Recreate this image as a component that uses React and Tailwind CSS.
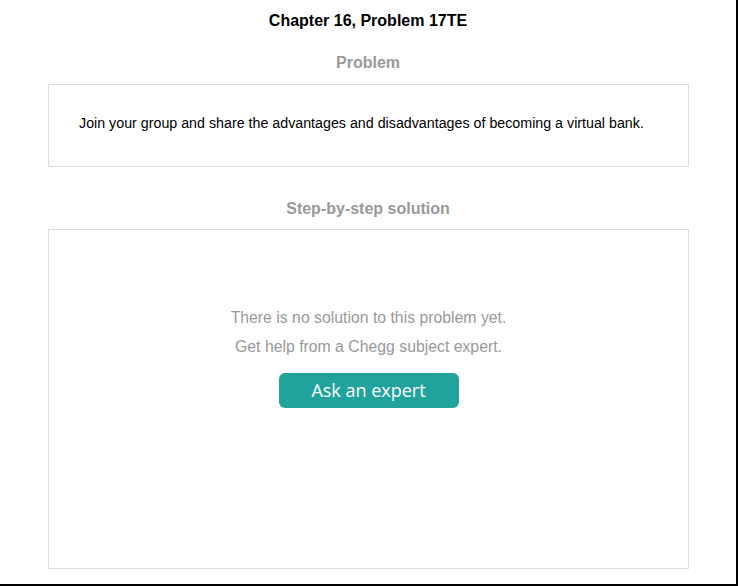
import React from "react";

const App = () => {
  return (
    <div
      className="w-[738px] h-[586px] bg-white border-r-2 border-b-2 border-black flex flex-col"
      style={{ fontFamily: '"Liberation Sans", Arial, sans-serif' }}
    >
      {/* Header */}
      <h1 className="mt-[12px] h-[18px] leading-[18px] text-center text-[16px] font-bold text-black">
        Chapter 16, Problem 17TE
      </h1>

      {/* Problem */}
      <h2 className="mt-[24px] h-[18px] leading-[18px] text-center text-[16px] font-bold text-[#999999]">
        Problem
      </h2>
      <div className="mt-[12px] ml-[48px] w-[641px] h-[83px] border border-[#dddddd] flex items-center pl-[30px] pb-[4px]">
        <p className="text-[14.25px] text-black">
          Join your group and share the advantages and disadvantages of becoming a virtual bank.
        </p>
      </div>

      {/* Solution */}
      <h2 className="mt-[33px] h-[18px] leading-[18px] text-center text-[16px] font-bold text-[#999999]">
        Step-by-step solution
      </h2>
      <div className="mt-[11px] ml-[48px] w-[641px] h-[340px] border border-[#dddddd] flex flex-col items-center pt-[76px]">
        <p className="h-[23px] leading-[23px] text-[15.8px] text-[#999999]">
          There is no solution to this problem yet.
        </p>
        <p className="mt-[6px] h-[23px] leading-[23px] text-[15.8px] text-[#999999]">
          Get help from a Chegg subject expert.
        </p>
        <button
          className="mt-[15px] w-[180px] h-[35px] rounded-[6px] bg-[#21a39b] text-white text-[18px]"
          style={{ fontFamily: '"Open Sans", "Noto Sans", sans-serif' }}
        >
          Ask an expert
        </button>
      </div>
    </div>
  );
};

export default App;
